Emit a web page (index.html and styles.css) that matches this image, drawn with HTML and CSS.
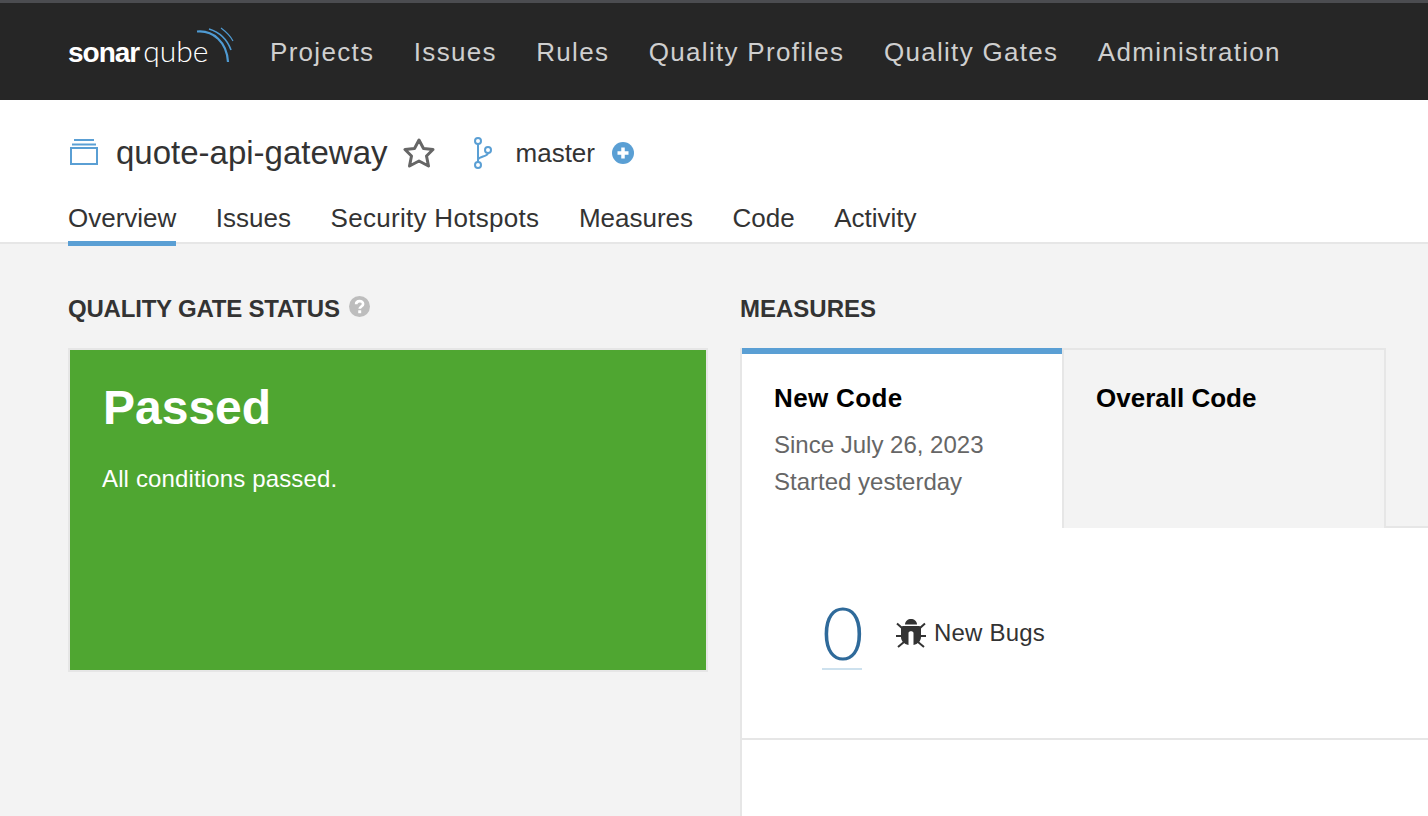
FILE: index.html
```html
<!DOCTYPE html>
<html lang="en">
<head>
    <meta charset="UTF-8">
    <title>quote-api-gateway</title>
    <link rel="stylesheet" href="styles.css">
</head>
<body>
    <header class="navbar">
        <a class="logo">
            <span class="logo-bold">sonar</span><span class="logo-light">qube</span>
            <svg class="logo-arcs" width="44" height="42" viewBox="0 0 44 42" fill="none" stroke="#4f9bd3">
                <path d="M4 7.500C20 6 34 18 35 38" stroke-width="2.200"/>
                <path d="M16 5C26 8 34 15 38 26" stroke-width="1.600"/>
                <path d="M28 4C32 7 37 11 40 17" stroke-width="1.200"/>
            </svg>
        </a>
        <nav class="nav-links">
            <a>Projects</a>
            <a>Issues</a>
            <a>Rules</a>
            <a>Quality Profiles</a>
            <a>Quality Gates</a>
            <a>Administration</a>
        </nav>
    </header>

    <section class="context">
        <div class="project-row">
            <svg class="project-icon" width="28" height="26" viewBox="0 0 28 26" fill="none" stroke="#5a9fd4" stroke-width="2">
                <rect x="1" y="9" width="26" height="16"/>
                <path d="M2 5.500H26M4 1H24"/>
            </svg>
            <span class="project-name">quote-api-gateway</span>
            <svg class="star-icon" width="32" height="30" viewBox="0 0 32 30" fill="none" stroke="#666" stroke-width="3" stroke-linejoin="round">
                <path d="M16 2L20.500 10.500L30 11.500L23.500 18L25.500 28L16 23L6.500 28L8.500 18L2 11.500L11.500 10.500Z"/>
            </svg>
            <svg class="branch-icon" width="20" height="34" viewBox="0 0 20 34" fill="none" stroke="#5a9fd4" stroke-width="2">
                <circle cx="5" cy="5" r="3"/>
                <circle cx="5" cy="29" r="3"/>
                <circle cx="15" cy="14" r="3"/>
                <path d="M5 8V26M15 17C15 21 5 20 5 24"/>
            </svg>
            <span class="branch-name">master</span>
            <svg class="plus-icon" width="22" height="22" viewBox="0 0 22 22">
                <circle cx="11" cy="11" r="11" fill="#5a9fd4"/>
                <path d="M11 5.500V16.500M5.500 11H16.500" stroke="#fff" stroke-width="3.500"/>
            </svg>
        </div>
        <nav class="tabs">
            <a class="tab active">Overview</a>
            <a class="tab">Issues</a>
            <a class="tab tab-wide">Security Hotspots</a>
            <a class="tab">Measures</a>
            <a class="tab">Code</a>
            <a class="tab">Activity</a>
        </nav>
    </section>

    <main class="overview">
        <section class="gate-col">
            <h2 class="section-title section-title-gate">Quality Gate Status
                <svg class="help-icon" width="21" height="21" viewBox="0 0 20 20">
                    <circle cx="10" cy="10" r="10" fill="#bdbdbd"/>
                    <path d="M6.800 7.800C6.800 3.800 13.400 3.800 13.400 7.600C13.400 10 10.200 10 10.200 12.200" fill="none" stroke="#fff" stroke-width="2.600"/>
                    <rect x="8.800" y="13.600" width="2.800" height="2.800" fill="#fff"/>
                </svg>
            </h2>
            <div class="gate-box">
                <div class="gate-status">Passed</div>
                <div class="gate-text">All conditions passed.</div>
            </div>
        </section>

        <section class="measures-col">
            <h2 class="section-title">Measures</h2>
            <div class="period-tabs">
                <div class="period active">
                    <div class="period-title">New Code</div>
                    <div class="period-line">Since July 26, 2023</div>
                    <div class="period-line">Started yesterday</div>
                </div>
                <div class="period">
                    <div class="period-title">Overall Code</div>
                </div>
                <div class="period-rest"></div>
            </div>
            <div class="measures-panel">
                <div class="measure-row">
                    <a class="measure-value">0</a>
                    <svg class="bug-icon" width="30" height="30" viewBox="0 0 30 30" fill="#333">
                        <path d="M9 6.500C9 3 12 1 15 1C18 1 21 3 21 6.500Z"/>
                        <path d="M7 8H23Q25 8 25 10V19C25 23 22 26 17.500 27V15C17.500 12.500 12.500 12.500 12.500 15V27C8 26 5 23 5 19V10Q5 8 7 8Z"/>
                        <path d="M1 5.500L6 10M29 5.500L24 10M0 18H5M30 18H25M2 29L8 24M28 29L22 24" fill="none" stroke="#333" stroke-width="2"/>
                    </svg>
                    <span class="measure-label">New Bugs</span>
                </div>
            </div>
        </section>
    </main>
</body>
</html>
```

FILE: styles.css
```css
html, body {
    margin: 0;
    padding: 0;
    height: 816px;
    overflow: hidden;
}

body {
    font-family: "Liberation Sans", Arial, sans-serif;
    background-color: #f3f3f3;
    color: #333;
    font-size: 24px;
    font-kerning: none;
}

.navbar {
    height: 97px;
    border-top: 3px solid #4b4c50;
    background-color: #262626;
    display: flex;
    align-items: center;
    padding-left: 68px;
}

.logo {
    position: relative;
    width: 202px;
    height: 41px;
    margin-bottom: 2px;
    color: #fff;
    font-size: 28px;
    line-height: 41px;
    flex: none;
    white-space: nowrap;
}

.logo-bold {
    font-weight: 700;
    letter-spacing: -1px;
}

.logo-light {
    font-family: "Lato", sans-serif;
    font-weight: 300;
    font-size: 30px;
    margin-left: 4px;
}

.logo-arcs {
    position: absolute;
    left: 125px;
    top: -6px;
}

.nav-links {
    display: flex;
    gap: 39.5px;
    margin-top: 2px;
}

.nav-links a {
    color: #cfcfcf;
    font-size: 26px;
    letter-spacing: 1.3px;
}

.context {
    background-color: #fff;
    height: 144px;
    border-bottom: 2px solid #e6e6e6;
    padding-left: 68px;
    box-sizing: border-box;
}

.project-row {
    height: 106px;
    display: flex;
    align-items: center;
}

.project-icon {
    margin-left: 2px;
    margin-right: 18px;
    margin-bottom: 2px;
}

.project-name {
    font-size: 33px;
    margin-right: 15px;
}

.star-icon {
    margin-right: 38px;
}

.branch-icon {
    margin-right: 23px;
}

.branch-name {
    font-size: 26px;
    margin-right: 17px;
}

.tabs {
    display: flex;
    gap: 39.5px;
}

.tab {
    font-size: 26px;
    height: 40px;
    line-height: 24px;
    box-sizing: border-box;
}

.tab-wide {
    letter-spacing: 0.3px;
}

.tab.active {
    border-bottom: 5px solid #5a9fd4;
}

.overview {
    display: flex;
    padding-left: 68px;
}

.gate-col {
    width: 640px;
    margin-right: 32px;
    flex: none;
}

.measures-col {
    flex: 1;
}

.section-title {
    margin: 0;
    height: 104px;
    padding-top: 50px;
    box-sizing: border-box;
    font-size: 24px;
    line-height: 30px;
    font-weight: 700;
    font-kerning: normal;
    text-transform: uppercase;
    display: flex;
    align-items: flex-start;
    gap: 9px;
}

.section-title-gate {
    letter-spacing: -0.2px;
}

.help-icon {
    margin-top: 2px;
}

.gate-box {
    height: 324px;
    box-sizing: border-box;
    border: 2px solid #e6e6e6;
    background-color: #4fa631;
    color: #fff;
    padding: 29px 32px;
}

.gate-status {
    font-size: 48px;
    font-weight: 700;
    line-height: 58px;
    margin-left: 1px;
}

.gate-text {
    font-size: 24px;
    line-height: 30px;
    margin-top: 27px;
    letter-spacing: 0.14px;
}

.period-tabs {
    display: flex;
    height: 180px;
}

.period {
    width: 324px;
    box-sizing: border-box;
    border: 2px solid #e6e6e6;
    border-bottom: 0;
    padding: 32px 32px 0;
}

.period.active {
    width: 322px;
    background-color: #fff;
    border-top: 0;
    border-right: 0;
    box-shadow: inset 0 6px 0 #5a9fd4;
    padding-top: 34px;
}

.period.active .period-title {
    letter-spacing: 0.35px;
}

.period-rest {
    flex: 1;
    border-bottom: 2px solid #e6e6e6;
}

.period-title {
    color: #000;
    font-size: 26px;
    font-weight: 700;
    line-height: 32px;
    margin-bottom: 12px;
}

.period-line {
    color: #666;
    font-size: 24px;
    line-height: 37px;
}

.measures-panel {
    background-color: #fff;
    border-left: 2px solid #e6e6e6;
    height: 300px;
}

.measure-row {
    height: 212px;
    box-sizing: border-box;
    border-bottom: 2px solid #e6e6e6;
    display: flex;
    align-items: center;
    padding-left: 80px;
}

.measure-value {
    font-family: "Lato", sans-serif;
    font-weight: 300;
    font-size: 72px;
    line-height: 72px;
    color: #2f6a9a;
    border-bottom: 2px solid #cde1ee;
    width: 40px;
    text-align: center;
    margin-right: 34px;
}

.bug-icon {
    margin-right: 8px;
}

.measure-label {
    letter-spacing: 0.2px;
}
```
